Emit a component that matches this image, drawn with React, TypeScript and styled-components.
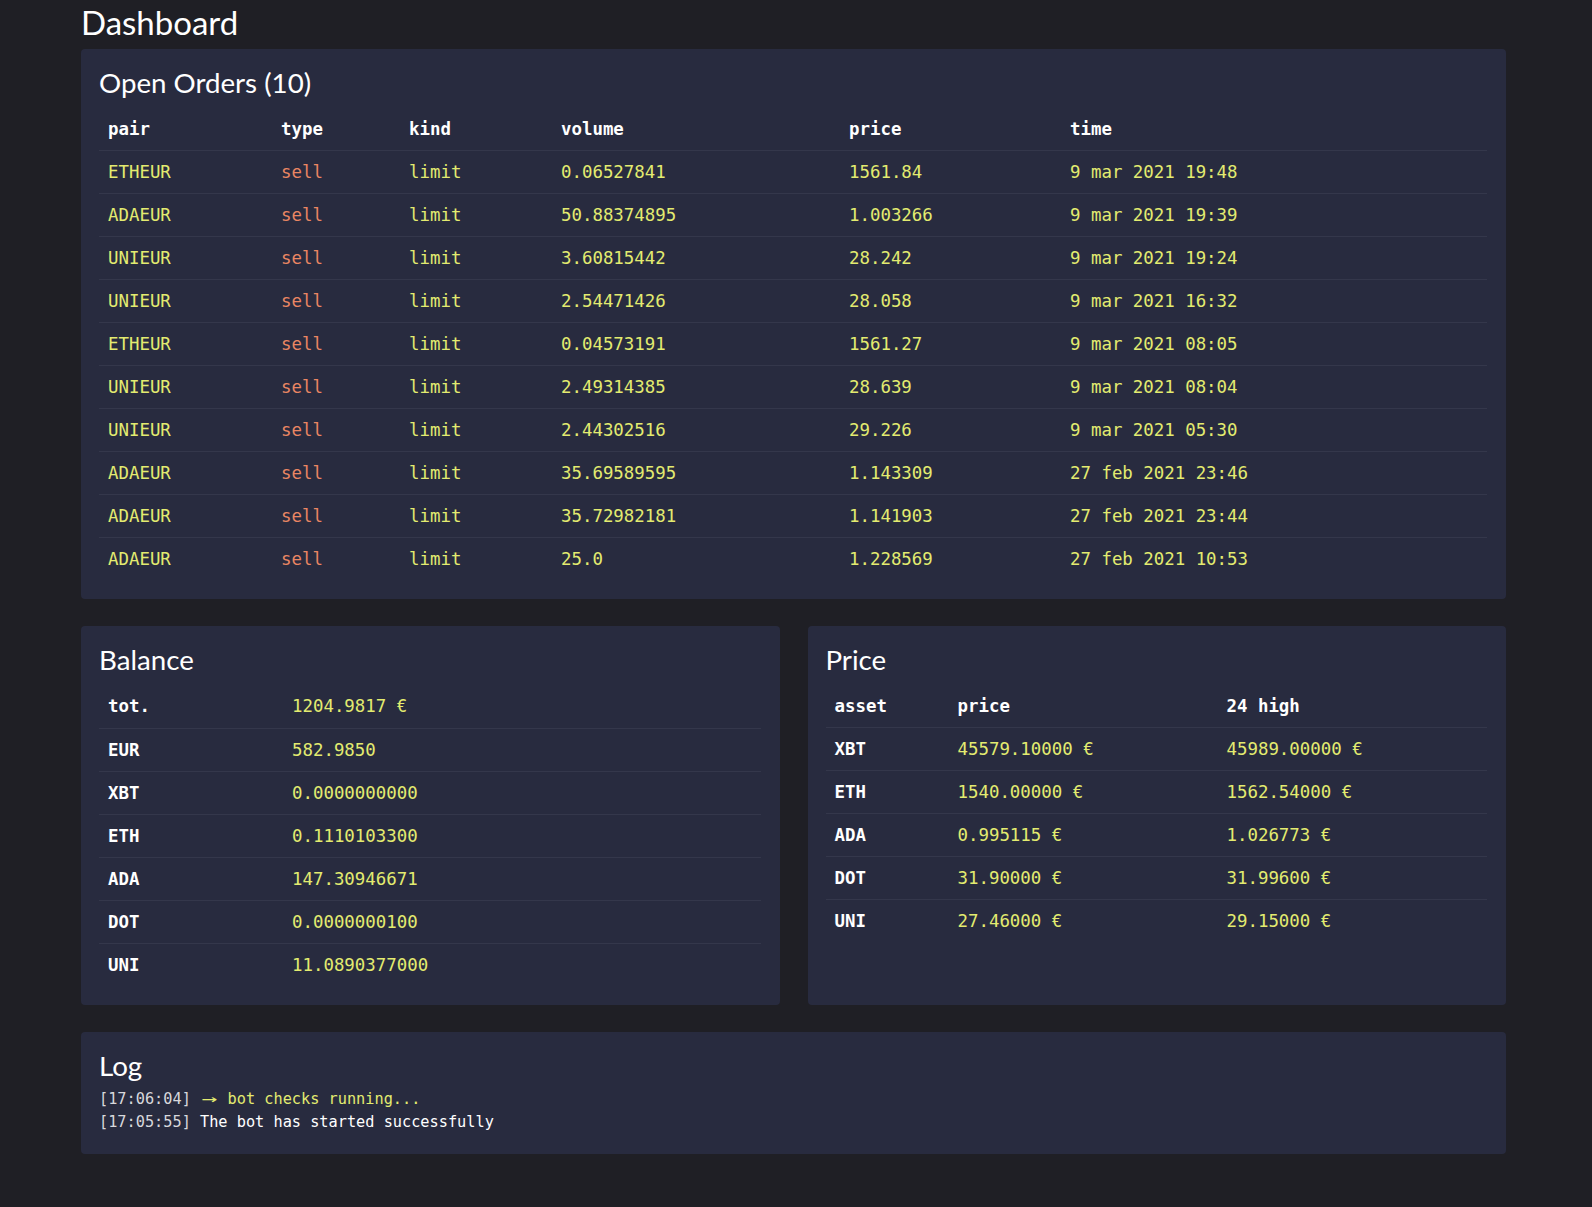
import React from "react";
import styled, { createGlobalStyle } from "styled-components";

const GlobalStyle = createGlobalStyle`
  html, body { margin: 0; padding: 0; background: #1f1f25; }
  body { font-family: "Lato", "Noto Sans", sans-serif; color: #f2f2f5; }
`;

const Page = styled.div`
  padding: 0 86px 40px 81px;
  min-height: 1207px;
  box-sizing: border-box;
`;

const PageTitle = styled.h1`
  margin: 0;
  height: 49px;
  line-height: 44px;
  font-family: "Lato", sans-serif;
  font-weight: 400;
  font-size: 33px;
  color: #ffffff;
`;

const Stack = styled.div`
  display: flex;
  flex-direction: column;
  gap: 27px;
`;

const Row = styled.div`
  display: grid;
  grid-template-columns: 1fr 1fr;
  gap: 28px;
`;

const Card = styled.section`
  background: #282b3f;
  border-radius: 4px;
  padding: 16px 19px 19px 18px;
  box-sizing: border-box;
`;

const CardTitle = styled.h2`
  margin: 0 0 7px 0;
  height: 36px;
  line-height: 36px;
  font-family: "Lato", sans-serif;
  font-weight: 400;
  font-size: 27.7px;
  color: #ffffff;
`;

const Table = styled.table`
  width: 100%;
  border-collapse: collapse;
  table-layout: fixed;
  font-family: "DejaVu Sans Mono", monospace;
  font-size: 17.4px;
`;

const Th = styled.th<{ $w?: number }>`
  text-align: left;
  font-weight: 700;
  color: #ffffff;
  height: 42px;
  padding: 0 0 0 9px;
  box-sizing: border-box;
  border-bottom: 1px solid #34374b;
  ${(p) => (p.$w ? `width: ${p.$w}px;` : "")}
`;

const Tr = styled.tr`
  &:not(:last-child) td {
    border-bottom: 1px solid #34374b;
  }
`;

const Td = styled.td<{ $tone?: "yellow" | "orange" | "white"; $w?: number }>`
  height: 43px;
  padding: 0 0 0 9px;
  box-sizing: border-box;
  white-space: nowrap;
  font-weight: ${(p) => (p.$tone === "white" ? 700 : 400)};
  color: ${(p) =>
    p.$tone === "orange" ? "#ea8663" : p.$tone === "white" ? "#ffffff" : "#e3eb70"};
  ${(p) => (p.$w ? `width: ${p.$w}px;` : "")}
`;

const LogBody = styled.div`
  font-family: "DejaVu Sans Mono", monospace;
  font-size: 15.25px;
  line-height: 23.4px;
  margin-top: -3px;
`;

const LogLine = styled.div`
  white-space: pre;
  color: #ffffff;
`;

const Stamp = styled.span`
  color: #d8d8dc;
`;

const Accent = styled.span`
  color: #e3eb70;
`;

const Arrow = styled.span`
  display: inline-block;
  width: 2ch;
  text-align: center;
  transform: scaleX(1.7);
  color: #e3eb70;
`;

const orders = [
  ["ETHEUR", "0.06527841", "1561.84", "9 mar 2021 19:48"],
  ["ADAEUR", "50.88374895", "1.003266", "9 mar 2021 19:39"],
  ["UNIEUR", "3.60815442", "28.242", "9 mar 2021 19:24"],
  ["UNIEUR", "2.54471426", "28.058", "9 mar 2021 16:32"],
  ["ETHEUR", "0.04573191", "1561.27", "9 mar 2021 08:05"],
  ["UNIEUR", "2.49314385", "28.639", "9 mar 2021 08:04"],
  ["UNIEUR", "2.44302516", "29.226", "9 mar 2021 05:30"],
  ["ADAEUR", "35.69589595", "1.143309", "27 feb 2021 23:46"],
  ["ADAEUR", "35.72982181", "1.141903", "27 feb 2021 23:44"],
  ["ADAEUR", "25.0", "1.228569", "27 feb 2021 10:53"],
];

const balance = [
  ["tot.", "1204.9817 €"],
  ["EUR", "582.9850"],
  ["XBT", "0.0000000000"],
  ["ETH", "0.1110103300"],
  ["ADA", "147.30946671"],
  ["DOT", "0.0000000100"],
  ["UNI", "11.0890377000"],
];

const prices = [
  ["XBT", "45579.10000 €", "45989.00000 €"],
  ["ETH", "1540.00000 €", "1562.54000 €"],
  ["ADA", "0.995115 €", "1.026773 €"],
  ["DOT", "31.90000 €", "31.99600 €"],
  ["UNI", "27.46000 €", "29.15000 €"],
];

export default function App() {
  return (
    <>
      <GlobalStyle />
      <Page>
        <PageTitle>Dashboard</PageTitle>
        <Stack>
          <Card>
            <CardTitle>Open Orders (10)</CardTitle>
            <Table>
              <thead>
                <tr>
                  <Th $w={173}>pair</Th>
                  <Th $w={128}>type</Th>
                  <Th $w={152}>kind</Th>
                  <Th $w={288}>volume</Th>
                  <Th $w={221}>price</Th>
                  <Th>time</Th>
                </tr>
              </thead>
              <tbody>
                {orders.map((o, i) => (
                  <Tr key={i}>
                    <Td>{o[0]}</Td>
                    <Td $tone="orange">sell</Td>
                    <Td>limit</Td>
                    <Td>{o[1]}</Td>
                    <Td>{o[2]}</Td>
                    <Td>{o[3]}</Td>
                  </Tr>
                ))}
              </tbody>
            </Table>
          </Card>
          <Row>
            <Card>
              <CardTitle>Balance</CardTitle>
              <Table>
                <tbody>
                  {balance.map((b, i) => (
                    <Tr key={i}>
                      <Td $tone="white" $w={184}>{b[0]}</Td>
                      <Td>{b[1]}</Td>
                    </Tr>
                  ))}
                </tbody>
              </Table>
            </Card>
            <Card>
              <CardTitle>Price</CardTitle>
              <Table>
                <thead>
                  <tr>
                    <Th $w={123}>asset</Th>
                    <Th $w={269}>price</Th>
                    <Th>24 high</Th>
                  </tr>
                </thead>
                <tbody>
                  {prices.map((p, i) => (
                    <Tr key={i}>
                      <Td $tone="white">{p[0]}</Td>
                      <Td>{p[1]}</Td>
                      <Td>{p[2]}</Td>
                    </Tr>
                  ))}
                </tbody>
              </Table>
            </Card>
          </Row>
          <Card>
            <CardTitle>Log</CardTitle>
            <LogBody>
              <LogLine>
                <Stamp>[17:06:04]</Stamp> <Arrow>→</Arrow>
                <Accent> bot checks running...</Accent>
              </LogLine>
              <LogLine>
                <Stamp>[17:05:55]</Stamp> The bot has started successfully
              </LogLine>
            </LogBody>
          </Card>
        </Stack>
      </Page>
    </>
  );
}
